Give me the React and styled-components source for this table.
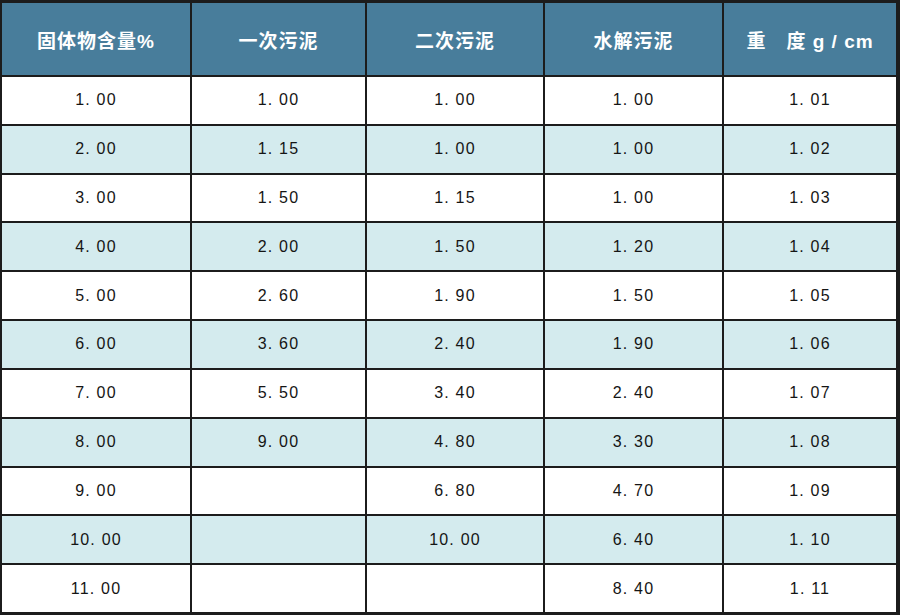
import React from 'react'
import styled, { createGlobalStyle } from 'styled-components'

const GlobalStyle = createGlobalStyle`
  html, body {
    margin: 0;
    padding: 0;
    background: #ffffff;
  }
`

const Table = styled.div`
  display: grid;
  grid-template-columns: 188px 173px 176px 177px 172px;
  grid-template-rows: 72px repeat(11, 1fr);
  gap: 2px;
  box-sizing: border-box;
  width: 900px;
  height: 615px;
  padding: 3px 4px 3px 2px;
  background-color: #1c1c1c;
  font-family: "Liberation Sans", Arial, "Noto Sans CJK SC", sans-serif;
`

const HeadCell = styled.div`
  display: flex;
  align-items: center;
  justify-content: center;
  background-color: #487d9b;
  color: #ffffff;
  font-size: 19px;
  font-weight: bold;
  letter-spacing: 1px;
  white-space: pre;
`

const Cell = styled.div`
  display: flex;
  align-items: center;
  justify-content: center;
  background-color: ${p => (p.$striped ? '#d4ebee' : '#ffffff')};
  color: #151515;
  font-size: 16px;
  letter-spacing: 1.2px;
  white-space: pre;
`

const headers = ['固体物含量%', '一次污泥', '二次污泥', '水解污泥', '重　度 g / cm']

const rows = [
  ['1.00', '1.00', '1.00', '1.00', '1.01'],
  ['2.00', '1.15', '1.00', '1.00', '1.02'],
  ['3.00', '1.50', '1.15', '1.00', '1.03'],
  ['4.00', '2.00', '1.50', '1.20', '1.04'],
  ['5.00', '2.60', '1.90', '1.50', '1.05'],
  ['6.00', '3.60', '2.40', '1.90', '1.06'],
  ['7.00', '5.50', '3.40', '2.40', '1.07'],
  ['8.00', '9.00', '4.80', '3.30', '1.08'],
  ['9.00', '', '6.80', '4.70', '1.09'],
  ['10.00', '', '10.00', '6.40', '1.10'],
  ['11.00', '', '', '8.40', '1.11'],
]

// numbers in the source use a wide dot, so a space follows it
const fmt = v => v.replace('.', '. ')

export default function App () {
  return (
    <>
      <GlobalStyle />
      <Table>
        {headers.map(h => (
          <HeadCell key={h}>{h}</HeadCell>
        ))}
        {rows.map((row, i) =>
          row.map((v, j) => (
            <Cell key={i + '-' + j} $striped={i % 2 === 1}>
              {fmt(v)}
            </Cell>
          )),
        )}
      </Table>
    </>
  )
}
